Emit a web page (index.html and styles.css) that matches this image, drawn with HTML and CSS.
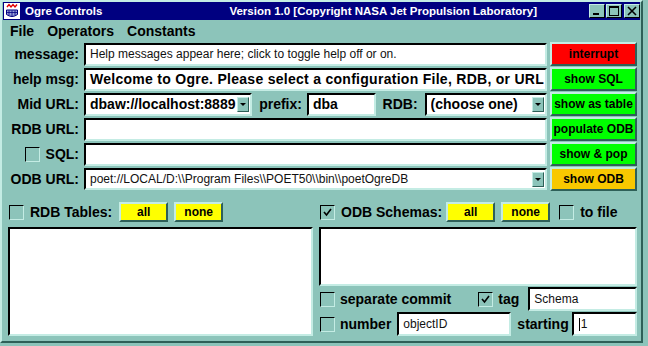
FILE: index.html
```html
<!DOCTYPE html>
<html lang="en">
<head>
    <meta charset="UTF-8">
    <title>Ogre Controls</title>
    <link rel="stylesheet" href="styles.css">
</head>
<body>

<div class="window">
    <div class="titlebar">
        <svg class="app-icon" width="16" height="16" viewBox="0 0 16 16">
            <rect width="16" height="16" fill="#fff"/>
            <path d="M3 4 L5 1.5 L7 4 L9 1.5 L11 4 L13 1.5" stroke="#e00000" stroke-width="1.4" fill="none"/>
            <path d="M2.5 7 H13.5 V11.5 Q8 15.5 2.5 11.5 Z" fill="#9aa0d8" stroke="#000080"/>
            <path d="M5 7.5 V12.5 M8 7.5 V13.5 M11 7.5 V12.5 M2.5 9.5 H13.5" stroke="#000080" stroke-width="0.8"/>
        </svg>
        <span class="title">Ogre Controls</span>
        <span class="title title-version">Version 1.0 [Copyright NASA Jet Propulsion Laboratory]</span>
        <div class="win-buttons">
            <span class="win-btn"><svg width="12" height="10" viewBox="0 0 12 10"><rect x="2" y="7" width="6" height="2" fill="#000"/></svg></span>
            <span class="win-btn"><svg width="12" height="10" viewBox="0 0 12 10"><rect x="1.5" y="0.5" width="9" height="9" fill="none" stroke="#000"/><rect x="1" y="0" width="10" height="2" fill="#000"/></svg></span>
            <span class="win-btn win-close"><svg width="12" height="10" viewBox="0 0 12 10"><path d="M2 1 L10 9 M10 1 L2 9" stroke="#000" stroke-width="1.6"/></svg></span>
        </div>
    </div>

    <div class="menubar">
        <span>File</span>
        <span>Operators</span>
        <span>Constants</span>
    </div>

    <div class="controls">
        <div class="label">message:</div>
        <div class="field">Help messages appear here; click to toggle help off or on.</div>
        <button class="btn btn--red">interrupt</button>

        <div class="label">help msg:</div>
        <div class="field field--bold field--wide">Welcome to Ogre. Please select a configuration File, RDB, or URL</div>
        <button class="btn btn--green">show SQL</button>

        <div class="label">Mid URL:</div>
        <div class="midrow">
            <div class="field field--bold select select--mid">
                <span class="select__text">dbaw://localhost:8889</span>
                <span class="arrow"></span>
            </div>
            <span class="inline-label">prefix:</span>
            <div class="field field--bold prefix">dba</div>
            <span class="inline-label">RDB:</span>
            <div class="field field--bold select select--rdb">
                <span class="select__text">(choose one)</span>
                <span class="arrow"></span>
            </div>
        </div>
        <button class="btn btn--green">show as table</button>

        <div class="label">RDB URL:</div>
        <div class="field"></div>
        <button class="btn btn--green">populate ODB</button>

        <div class="label label--check"><span class="check"></span>SQL:</div>
        <div class="field"></div>
        <button class="btn btn--green">show &amp; pop</button>

        <div class="label">ODB URL:</div>
        <div class="field select select--odb">
            <span class="select__text">poet://LOCAL/D:\\Program Files\\POET50\\bin\\poetOgreDB</span>
            <span class="arrow"></span>
        </div>
        <button class="btn btn--orange">show ODB</button>
    </div>

    <div class="panels">
        <div class="panel panel--left">
            <div class="panel__head">
                <span class="check"></span>
                <span class="head-label head-label--rdb">RDB Tables:</span>
                <button class="btn btn--yellow small-btn">all</button>
                <button class="btn btn--yellow small-btn">none</button>
            </div>
            <div class="listbox listbox--tall"></div>
        </div>

        <div class="panel panel--right">
            <div class="panel__head">
                <span class="check check--on"><svg width="11" height="11" viewBox="0 0 11 11"><path d="M2 5 L4.5 8 L9 2" stroke="#000" stroke-width="1.6" fill="none"/></svg></span>
                <span class="head-label head-label--odb">ODB Schemas:</span>
                <button class="btn btn--yellow small-btn">all</button>
                <button class="btn btn--yellow small-btn">none</button>
                <span class="check check--tofile"></span>
                <span class="head-label">to file</span>
            </div>
            <div class="listbox listbox--short"></div>

            <div class="opt-row">
                <span class="check"></span>
                <span class="head-label">separate commit</span>
                <span class="check check--on check--tag"><svg width="11" height="11" viewBox="0 0 11 11"><path d="M2 5 L4.5 8 L9 2" stroke="#000" stroke-width="1.6" fill="none"/></svg></span>
                <span class="head-label">tag</span>
                <div class="field field--plain tag-input">Schema</div>
            </div>
            <div class="opt-row">
                <span class="check"></span>
                <span class="head-label">number</span>
                <div class="field field--plain number-input">objectID</div>
                <span class="head-label starting">starting</span>
                <div class="field field--plain start-input"><span class="caret"></span>1</div>
            </div>
        </div>
    </div>
</div>

</body>
</html>
```

FILE: styles.css
```css
body {
    margin: 0;
    background-color: #8cc4ba;
    font-family: "Liberation Sans", Arial, sans-serif;
    color: #000;
}

.window {
    width: 643px;
    height: 343px;
    box-sizing: border-box;
    border: 2px solid;
    border-color: #c4ece4 #2e6058 #2e6058 #c4ece4;
    padding: 0 1px 1px 1px;
    display: flex;
    flex-direction: column;
}

/* title bar */
.titlebar {
    height: 18px;
    background-color: #000080;
    display: flex;
    align-items: center;
    padding-left: 1px;
}

.app-icon {
    margin-right: 5px;
}

.title {
    color: #fff;
    font-weight: bold;
    font-size: 11.5px;
    white-space: nowrap;
}

.title-version {
    margin-left: auto;
    margin-right: 52px;
}

.win-buttons {
    display: flex;
    gap: 1px;
}

.win-btn {
    width: 16px;
    height: 14px;
    box-sizing: border-box;
    background-color: #8cc4ba;
    border: 1px solid;
    border-color: #c4ece4 #000 #000 #c4ece4;
    display: flex;
    align-items: center;
    justify-content: center;
}

.win-close {
    margin-left: 1px;
}

/* menu */
.menubar {
    height: 22px;
    display: flex;
    align-items: center;
    gap: 13px;
    padding-left: 7px;
    font-weight: bold;
    font-size: 14px;
}

/* top form */
.controls {
    display: grid;
    grid-template-columns: 78px 463px 87px;
    grid-auto-rows: 24px;
    column-gap: 3px;
    row-gap: 1px;
}

.label {
    font-weight: bold;
    font-size: 14px;
    text-align: right;
    padding-right: 2px;
    align-self: center;
    white-space: nowrap;
}

.label--check {
    display: flex;
    justify-content: flex-end;
    align-items: center;
    gap: 6px;
}

.field {
    background-color: #fff;
    box-sizing: border-box;
    border: 2px solid;
    border-color: #000 #c4ece4 #c4ece4 #000;
    font-size: 12px;
    color: #111;
    padding-left: 4px;
    display: flex;
    align-items: center;
    white-space: nowrap;
    overflow: hidden;
    height: 23px;
    align-self: center;
}

.field--bold {
    font-weight: bold;
    font-size: 14px;
    color: #000;
}

.field--wide {
    letter-spacing: 0.28px;
}

.select {
    padding-right: 1px;
}

.select__text {
    flex: 1;
    overflow: hidden;
}

.select--odb {
    height: 22px;
}

.arrow {
    width: 12px;
    height: 15px;
    box-sizing: border-box;
    background-color: #8cc4ba;
    border: 1px solid;
    border-color: #c4ece4 #2e6058 #2e6058 #c4ece4;
    display: flex;
    align-items: center;
    justify-content: center;
}

.arrow::after {
    content: "";
    border-left: 3px solid transparent;
    border-right: 3px solid transparent;
    border-top: 3px solid #000;
}

.midrow {
    display: flex;
    align-items: center;
}

.select--mid {
    width: 169px;
}

.inline-label {
    font-weight: bold;
    font-size: 14px;
    margin-left: 7px;
    margin-right: 5px;
}

.prefix {
    width: 69px;
}

.select--rdb {
    width: 123px;
    margin-left: 2px;
}

/* buttons */
.btn {
    box-sizing: border-box;
    border: 2px solid;
    border-color: #c4ece4 #2e6058 #2e6058 #c4ece4;
    font-family: "Liberation Sans", Arial, sans-serif;
    font-weight: bold;
    font-size: 12px;
    color: #000;
    padding: 0;
    white-space: nowrap;
}

.btn--red {
    background-color: #ff0000;
}

.btn--green {
    background-color: #00ff00;
}

.btn--orange {
    background-color: #f8c800;
}

.btn--yellow {
    background-color: #ffff00;
}

/* checkboxes */
.check {
    width: 15px;
    height: 15px;
    box-sizing: border-box;
    border: 1px solid;
    border-color: #000 #c4ece4 #c4ece4 #000;
    background-color: #8cc4ba;
    display: flex;
    align-items: center;
    justify-content: center;
    flex-shrink: 0;
}

/* lower panels */
.panels {
    display: flex;
    gap: 6px;
    margin-top: 11px;
    padding-left: 5px;
}

.panel {
    display: flex;
    flex-direction: column;
}

.panel--left {
    width: 305px;
}

.panel--right {
    width: 318px;
}

.panel__head {
    height: 20px;
    display: flex;
    align-items: center;
    padding-left: 1px;
}

.head-label {
    font-weight: bold;
    font-size: 14px;
    margin-left: 6px;
    margin-right: 9px;
    white-space: nowrap;
}

.head-label--rdb {
    margin-right: 7px;
}

.head-label--odb {
    margin-right: 4px;
}

.small-btn {
    width: 49px;
    height: 20px;
    margin-right: 6px;
}

.check--tofile {
    margin-left: 3px;
}

.listbox {
    background-color: #fff;
    box-sizing: border-box;
    border: 2px solid;
    border-color: #000 #c4ece4 #c4ece4 #000;
    margin-top: 5px;
}

.listbox--tall {
    height: 109px;
}

.listbox--short {
    height: 59px;
}

.opt-row {
    height: 24px;
    margin-top: 1px;
    display: flex;
    align-items: center;
    padding-left: 1px;
}

.opt-row .head-label {
    margin-left: 5px;
    margin-right: 0;
}

.field--plain {
    height: 24px;
}

.check--tag {
    margin-left: 27px;
}

.tag-input {
    flex: 1;
    margin-left: 9px;
}

.number-input {
    width: 114px;
    margin-left: 6px;
}

.opt-row .starting {
    margin-left: 6px;
}

.start-input {
    flex: 1;
    margin-left: 3px;
    padding-left: 5px;
}

.caret {
    width: 1px;
    height: 13px;
    background-color: #000;
    margin-right: 1px;
}
```
